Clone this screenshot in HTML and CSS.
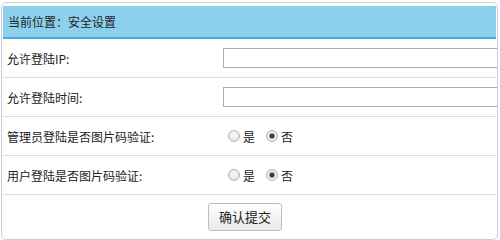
FILE: index.html
```html
<!DOCTYPE html>
<html lang="zh-CN">
<head>
<meta charset="UTF-8">
<title>安全设置</title>
<link rel="stylesheet" href="styles.css">
</head>
<body>
<div class="panel">
  <div class="panel-title">当前位置：安全设置</div>
  <form class="settings">
    <div class="row">
      <label class="row-label" for="allowIp">允许登陆IP:</label>
      <div class="row-field"><input type="text" id="allowIp" class="text-input"></div>
    </div>
    <div class="row">
      <label class="row-label" for="allowTime">允许登陆时间:</label>
      <div class="row-field"><input type="text" id="allowTime" class="text-input"></div>
    </div>
    <div class="row">
      <span class="row-label">管理员登陆是否图片码验证:</span>
      <div class="row-field">
        <label class="choice"><input type="radio" name="adminCode" value="1">是</label>
        <label class="choice"><input type="radio" name="adminCode" value="0" checked>否</label>
      </div>
    </div>
    <div class="row">
      <span class="row-label">用户登陆是否图片码验证:</span>
      <div class="row-field">
        <label class="choice"><input type="radio" name="userCode" value="1">是</label>
        <label class="choice"><input type="radio" name="userCode" value="0" checked>否</label>
      </div>
    </div>
    <div class="actions">
      <button type="button" class="submit-btn">确认提交</button>
    </div>
  </form>
</div>
</body>
</html>
```

FILE: styles.css
```css
body { margin: 0; background: #fff; font-family: "Noto Sans CJK SC", "Liberation Sans", sans-serif; font-size: 12px; color: #222; }

.panel {
  margin: 2px 0 0 1px;
  width: 493px;
  height: 233px;
  padding: 3px 1px 0 1px;
  border: 1px solid #cbcbe2;
  border-radius: 5px;
  overflow: hidden;
}
.panel-title {
  height: 31px;
  line-height: 31px;
  padding-left: 5px;
  background: #8cd0ee;
  border-bottom: 2px solid #4da8df;
}

.row { display: flex; align-items: center; height: 38px; border-bottom: 1px solid #dedede; }
.row-label { flex: none; width: 216px; padding-left: 4px; }
.row-field { flex: none; display: flex; align-items: center; }

.text-input {
  flex: none;
  width: 300px;
  height: 18px;
  margin: 0;
  padding: 0;
  border: 1px solid #acacac;
  font: inherit;
}

.choice { display: flex; align-items: center; margin-left: 5px; margin-right: 6px; }
.choice input {
  appearance: none;
  width: 12px;
  height: 12px;
  margin: 0 3px 0 0;
  border: 1px solid #b4b4b4;
  border-radius: 50%;
  background: radial-gradient(circle at 50% 40%, #fafafa, #dcdcdc);
}
.choice input:checked {
  background: radial-gradient(circle, #3c3c3c 0 2px, #9a9a9a 2.5px, #f2f2f2 3.5px, #dcdcdc 6px);
}

.actions { display: flex; align-items: center; height: 43px; padding-left: 205px; }
.submit-btn {
  width: 74px;
  height: 28px;
  padding: 0;
  border: 1px solid #bdbdbd;
  border-radius: 3px;
  background: linear-gradient(#ffffff, #e9e9e9);
  font-family: "Noto Sans CJK SC", sans-serif;
  font-size: 13px;
  color: #222;
}
```
